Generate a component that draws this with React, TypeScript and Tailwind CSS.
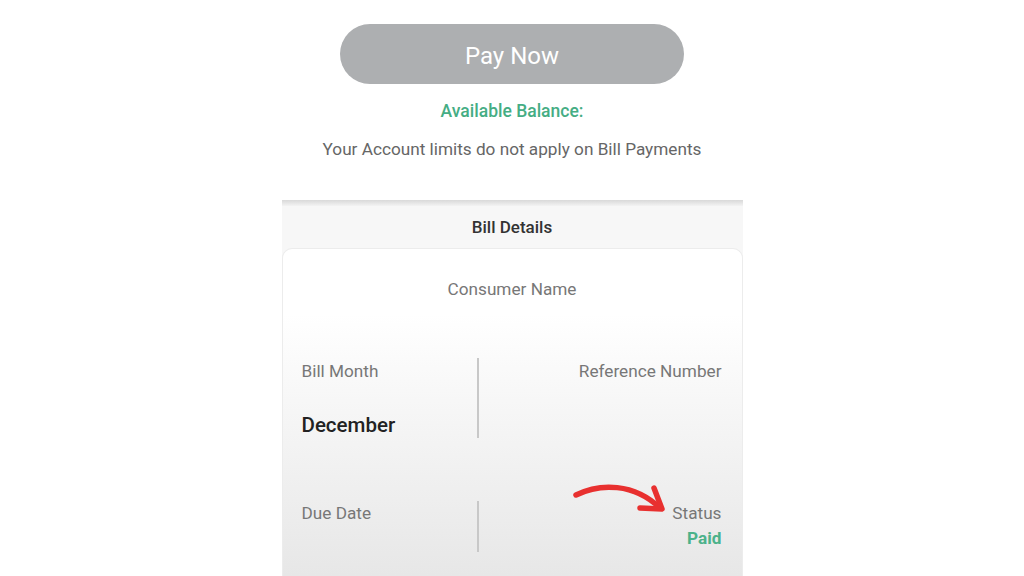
import React from 'react';

const font = { fontFamily: 'Roboto, "Noto Sans", sans-serif' };

const CurvedArrow: React.FC = () => (
  <svg
    className="absolute left-[93px] top-[-24px]"
    width="100"
    height="42"
    viewBox="0 0 100 42"
    fill="none"
  >
    <path
      d="M4 18 C 28 6, 62 6, 88 31"
      stroke="#e8302f"
      strokeWidth="5.5"
      strokeLinecap="round"
    />
    <path
      d="M82 11 L90 32 L68 31"
      stroke="#e8302f"
      strokeWidth="5.5"
      strokeLinecap="round"
      strokeLinejoin="round"
    />
  </svg>
);

export default function App() {
  return (
    <div className="w-full h-[576px] overflow-hidden bg-white flex justify-center" style={font}>
      <div className="w-[461px] flex flex-col">
        {/* Pay button */}
        <button className="mt-[24px] self-center w-[344px] h-[60px] pt-[4px] rounded-full bg-[#adafb1] text-white text-[24px] leading-none">
          Pay Now
        </button>

        <p className="mt-[17px] text-center text-[17.5px] leading-[20px] font-medium text-[#45ad84]">
          Available Balance:
        </p>
        <p className="mt-[18px] text-center text-[17.2px] leading-[20px] text-[#666]">
          Your Account limits do not apply on Bill Payments
        </p>

        {/* Bill details */}
        <div className="mt-[41px] h-[6px] bg-gradient-to-b from-[#d9d9d9] to-[#f3f3f3]" />
        <div className="bg-[#f7f7f7] flex-1 flex flex-col">
          <div className="h-[42px] pt-[1px] flex items-center justify-center text-[17px] font-medium text-[#333]">
            Bill Details
          </div>

          <div className="flex-1 rounded-t-[10px] border border-b-0 border-[#ececec] bg-gradient-to-b from-white from-20% to-[#e7e7e7]">
            <p className="pt-[30px] text-center text-[17.2px] leading-[20px] text-[#777]">
              Consumer Name
            </p>

            <div className="mt-[59px] h-[80px] grid grid-cols-[194px_1fr]">
              <div className="pl-[19px]">
                <p className="mt-[3px] text-[17.2px] leading-[20px] text-[#777]">Bill Month</p>
                <p className="mt-[32px] text-[20.5px] leading-[24px] font-medium text-[#222]">December</p>
              </div>
              <div className="pr-[20px] flex justify-end border-l-2 border-[#c8c8c8]">
                <p className="mt-[3px] text-[17.2px] leading-[20px] text-[#777]">Reference Number</p>
              </div>
            </div>

            <div className="mt-[63px] h-[51px] grid grid-cols-[194px_1fr]">
              <div className="pl-[19px]">
                <p className="mt-[2px] text-[17.2px] leading-[20px] text-[#777]">Due Date</p>
              </div>
              <div className="relative pr-[20px] flex flex-col items-end border-l-2 border-[#c8c8c8]">
                <CurvedArrow />
                <p className="mt-[2px] text-[17.2px] leading-[20px] text-[#777]">Status</p>
                <p className="mt-[5px] text-[17.2px] leading-[20px] font-bold text-[#4bb28a]">Paid</p>
              </div>
            </div>
          </div>
        </div>
      </div>
    </div>
  );
}
